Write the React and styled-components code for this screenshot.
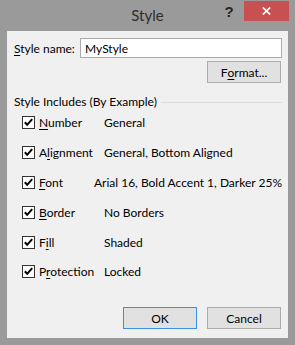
import React from "react";
import styled, { createGlobalStyle } from "styled-components";

const Global = createGlobalStyle`
  html, body { margin: 0; padding: 0; background: #999999; }
  body { font-family: Lato, "Noto Sans", sans-serif; }
`;

const Window = styled.div`
  width: 295px;
  height: 345px;
  background: #9a9a9a;
  display: flex;
  flex-direction: column;
  box-sizing: border-box;
`;

const TitleBar = styled.div`
  height: 31px;
  display: grid;
  grid-template-columns: 1fr auto 1fr;
  align-items: start;
  flex-shrink: 0;
`;

const Title = styled.div`
  grid-column: 2;
  font-family: Lato, "Noto Sans", sans-serif;
  font-size: 15px;
  line-height: 15px;
  padding-top: 8px;
  color: #2e2e2e;
`;

const TitleControls = styled.div`
  grid-column: 3;
  display: flex;
  justify-content: flex-end;
  align-items: flex-start;
  padding-top: 1px;
  padding-right: 6px;
`;

const HelpButton = styled.div`
  width: 24px;
  height: 20px;
  margin-right: 3px;
  display: flex;
  align-items: center;
  justify-content: center;
  font-family: "Liberation Sans", Arial, sans-serif;
  font-weight: bold;
  font-size: 15px;
  color: #262626;
`;

const CloseButton = styled.div`
  width: 45px;
  height: 20px;
  background: #c75050;
  display: flex;
  align-items: center;
  justify-content: center;
`;

const Client = styled.div`
  flex: 1;
  margin: 0 7px 7px 7px;
  background: #f0f0f0;
  display: flex;
  flex-direction: column;
  padding: 7px 6px 9px 7px;
  box-sizing: border-box;
  font-size: 12px;
  color: #000;
`;

const NameRow = styled.div`
  display: flex;
  align-items: center;
  height: 20px;
`;

const Label = styled.label`
  width: 66px;
  font-size: 12px;
`;

const TextInput = styled.div`
  flex: 1;
  height: 20px;
  box-sizing: border-box;
  border: 1px solid #ababab;
  background: #ffffff;
  display: flex;
  align-items: center;
  padding-left: 4px;
  font-size: 12px;
`;

const Key = styled.span`
  text-decoration: underline;
  text-underline-offset: 2px;
  text-decoration-thickness: 1px;
`;

const Button = styled.div`
  width: 74px;
  height: 22px;
  box-sizing: border-box;
  border: 1px solid ${(p) => (p.$default ? "#3b8fe8" : "#adadad")};
  background: #e1e1e1;
  display: flex;
  align-items: center;
  justify-content: center;
  font-size: 12px;
  color: #000;
`;

const FormatRow = styled.div`
  display: flex;
  justify-content: flex-end;
  margin-top: 3px;
  padding-right: 1px;
`;

const GroupHeader = styled.div`
  margin-top: 13px;
  height: 12px;
  display: flex;
  align-items: center;
  gap: 4px;
`;

const GroupTitle = styled.span`
  font-size: 12px;
  line-height: 12px;
  white-space: nowrap;
`;

const GroupLine = styled.div`
  flex: 1;
  height: 1px;
  background: #dcdcdc;
`;

const OptionList = styled.div`
  display: flex;
  flex-direction: column;
`;

const OptionRow = styled.div`
  height: 29.8px;
  display: flex;
  align-items: center;
  padding-left: 8px;
`;

const Box = styled.div`
  width: 13px;
  height: 13px;
  box-sizing: border-box;
  border: 1px solid #333333;
  background: #ffffff;
  display: flex;
  align-items: center;
  justify-content: center;
  margin-right: 4px;
`;

const OptionName = styled.span`
  width: 65px;
  font-size: 12px;
`;

const OptionValue = styled.span`
  font-size: 12px;
  white-space: nowrap;
`;

const Footer = styled.div`
  margin-top: auto;
  display: flex;
  justify-content: flex-end;
  gap: 10px;
  padding-right: 1px;
`;

const Check = () => (
  <svg width="11" height="11" viewBox="0 0 11 11">
    <path d="M1.8 5.2 L4.2 7.8 L9.2 2.2" fill="none" stroke="#000" strokeWidth="2" />
  </svg>
);

const options = [
  { pre: "", key: "N", post: "umber", value: "General" },
  { pre: "A", key: "l", post: "ignment", value: "General, Bottom Aligned" },
  { pre: "", key: "F", post: "ont", value: "Arial 16, Bold Accent 1, Darker 25%" },
  { pre: "", key: "B", post: "order", value: "No Borders" },
  { pre: "F", key: "i", post: "ll", value: "Shaded" },
  { pre: "P", key: "r", post: "otection", value: "Locked" },
];

export default function App() {
  return (
    <>
      <Global />
      <Window>
        <TitleBar>
          <Title>Style</Title>
          <TitleControls>
            <HelpButton>?</HelpButton>
            <CloseButton>
              <svg width="9" height="8" viewBox="0 0 9 8">
                <path d="M0.8 0.5 L8.2 7.5 M8.2 0.5 L0.8 7.5" stroke="#fff" strokeWidth="1.7" />
              </svg>
            </CloseButton>
          </TitleControls>
        </TitleBar>
        <Client>
          <NameRow>
            <Label>
              <Key>S</Key>tyle name:
            </Label>
            <TextInput>MyStyle</TextInput>
          </NameRow>
          <FormatRow>
            <Button>
              F<Key>o</Key>rmat...
            </Button>
          </FormatRow>
          <GroupHeader>
            <GroupTitle>Style Includes (By Example)</GroupTitle>
            <GroupLine />
          </GroupHeader>
          <OptionList>
            {options.map((o) => (
              <OptionRow key={o.value}>
                <Box>
                  <Check />
                </Box>
                <OptionName>
                  {o.pre}
                  <Key>{o.key}</Key>
                  {o.post}
                </OptionName>
                <OptionValue>{o.value}</OptionValue>
              </OptionRow>
            ))}
          </OptionList>
          <Footer>
            <Button $default>OK</Button>
            <Button>Cancel</Button>
          </Footer>
        </Client>
      </Window>
    </>
  );
}
